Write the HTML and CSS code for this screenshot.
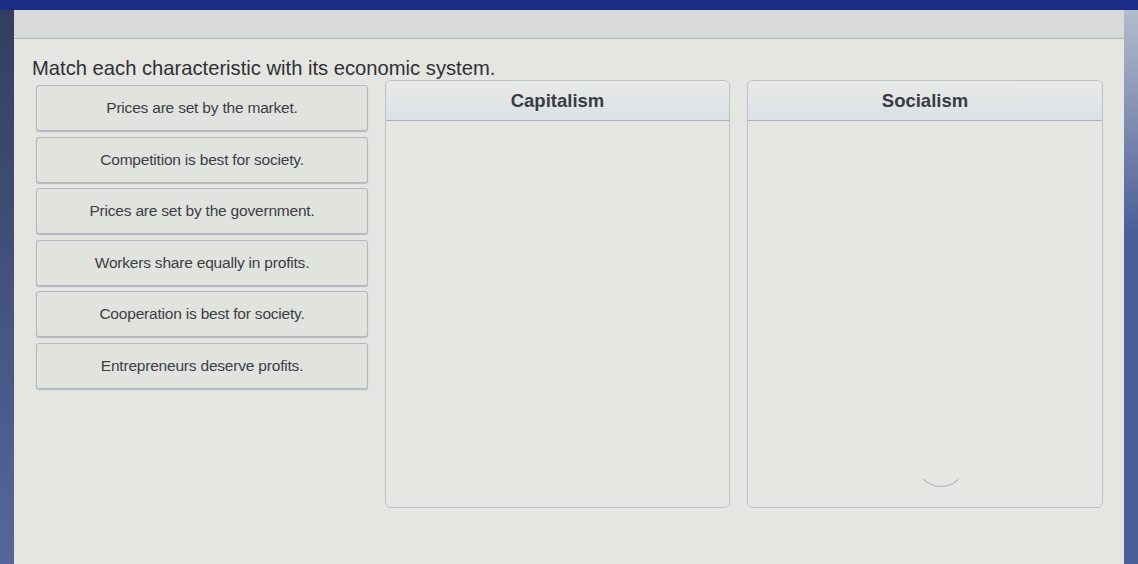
FILE: index.html
```html
<!DOCTYPE html>
<html lang="en">
<head>
    <meta charset="UTF-8">
    <meta name="viewport" content="width=device-width, initial-scale=1.0">
    <title>Economic Systems</title>
    <link rel="stylesheet" href="styles.css">
</head>
<body>
    <div class="topbar"></div>
    <div class="frame">
        <div class="edge edge-left"></div>
        <main class="page">
            <div class="toolbar"></div>
            <section class="question">
                <h1 class="prompt">Match each characteristic with its economic system.</h1>
                <div class="board">
                    <ul class="choices">
                        <li class="choice">Prices are set by the market.</li>
                        <li class="choice">Competition is best for society.</li>
                        <li class="choice">Prices are set by the government.</li>
                        <li class="choice">Workers share equally in profits.</li>
                        <li class="choice">Cooperation is best for society.</li>
                        <li class="choice">Entrepreneurs deserve profits.</li>
                    </ul>
                    <div class="bin">
                        <h2 class="bin-title">Capitalism</h2>
                        <div class="bin-drop"></div>
                    </div>
                    <div class="bin">
                        <h2 class="bin-title">Socialism</h2>
                        <div class="bin-drop">
                            <span class="cursor-arc"></span>
                        </div>
                    </div>
                </div>
            </section>
        </main>
        <div class="edge edge-right"></div>
    </div>
</body>
</html>
```

FILE: styles.css
```css
* {
    box-sizing: border-box;
    margin: 0;
    padding: 0;
}

html, body {
    height: 100%;
    overflow: hidden;
}

body {
    font-family: "Liberation Sans", Arial, sans-serif;
    background-color: #e5e6e1;
    display: flex;
    flex-direction: column;
}

.topbar {
    height: 10px;
    background-color: #1b2b86;
    flex-shrink: 0;
}

.frame {
    flex: 1;
    display: flex;
}

.edge {
    flex-shrink: 0;
}

.edge-left {
    width: 14px;
    background: linear-gradient(to bottom, #333e60, #55679a);
}

.edge-right {
    width: 14px;
    background: linear-gradient(to bottom, #b4bccc, #4b5f98 40%);
}

.page {
    flex: 1;
    display: flex;
    flex-direction: column;
    background-color: #e5e6e1;
}

.toolbar {
    height: 29px;
    background-color: #d8dad7;
    border-bottom: 1px solid #b6b9ba;
}

.question {
    padding: 17px 0 0 18px;
}

.prompt {
    font-size: 20.2px;
    line-height: 24px;
    font-weight: normal;
    color: #2f3036;
}

.board {
    display: grid;
    grid-template-columns: 332px 345px 356px;
    column-gap: 17px;
    padding-left: 4px;
}

.choices {
    list-style: none;
    display: flex;
    flex-direction: column;
    gap: 5.5px;
    padding-top: 5px;
}

.choice {
    height: 46px;
    display: flex;
    align-items: center;
    justify-content: center;
    font-size: 15.5px;
    color: #3c3e46;
    letter-spacing: -0.2px;
    background-color: #e1e3de;
    border: 1px solid #b3b8c6;
    border-radius: 3px;
    box-shadow: 0 1px 1px rgba(90, 95, 120, 0.35);
}

.bin {
    height: 428px;
    display: flex;
    flex-direction: column;
    border: 1px solid #bcc0c7;
    border-radius: 6px;
    overflow: hidden;
}

.bin-title {
    height: 40px;
    flex-shrink: 0;
    display: flex;
    align-items: center;
    justify-content: center;
    font-size: 18.5px;
    font-weight: bold;
    color: #3a3c43;
    background: linear-gradient(to bottom, #e8eae9, #dde1e4);
    border-bottom: 1px solid #a9b0bc;
}

.bin-drop {
    flex: 1;
    position: relative;
    background-color: #e6e7e2;
}

/* faint pointer ghost near the bottom of the drop zone */
.cursor-arc {
    position: absolute;
    left: 168px;
    top: 316px;
    width: 50px;
    height: 50px;
    border: 1.5px solid transparent;
    border-bottom-color: rgba(120, 124, 135, 0.5);
    border-radius: 50%;
}
```
